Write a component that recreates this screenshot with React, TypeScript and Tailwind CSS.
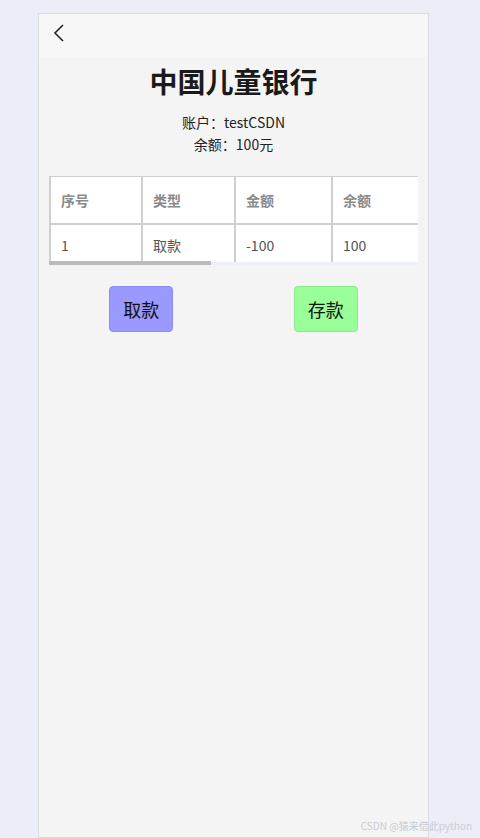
import React from 'react';

const columns = ['序号', '类型', '金额', '余额', '', ''];
const rows = [['1', '取款', '-100', '100', '', '']];
const widths = ['w-[92px]', 'w-[93px]', 'w-[97px]', 'w-[97px]', 'w-[240px]', 'w-[226px]'];

export default function App() {
  return (
    <div className="relative min-h-[838px] w-full overflow-hidden bg-[#ebeef7] font-['Microsoft_YaHei','Noto_Sans_CJK_SC',sans-serif]">
      <div className="ml-[38px] mt-[13px] flex h-[825px] w-[391px] flex-col border border-[#dcdcdc] bg-[#f4f4f4]">
        {/* top bar */}
        <div className="flex h-[43px] items-start bg-[#f7f7f7] pl-[14px] pt-[9px]">
          <svg width="12" height="20" viewBox="0 0 12 20" fill="none">
            <path d="M10 2 L2 10 L10 18" stroke="#222" strokeWidth="1.6" />
          </svg>
        </div>

        <h1 className="mt-[6px] text-center text-[28px] font-bold leading-[36px] text-[#1a1a1a]">中国儿童银行</h1>
        <div className="mt-[12px] text-center text-[14px] leading-[22px] text-[#222]">
          <p>账户：testCSDN</p>
          <p>余额：100元</p>
        </div>

        {/* table */}
        <div className="relative mx-[10px] mt-[21px] overflow-hidden">
          <div className="w-max border-t border-[#cfcfcf]">
            <div className="flex h-[48px] border-b-2 border-[#cfcfcf] bg-white">
              {columns.map((c, i) => (
                <div key={i} className={`${widths[i]} flex items-center border-l-2 border-[#cfcfcf] pl-[10px] text-[14px] font-bold text-[#8a8a8a]`}>
                  {c}
                </div>
              ))}
            </div>
            {rows.map((r) => (
              <div key={r[0]} className="flex h-[40px] bg-white">
                {r.map((v, i) => (
                  <div key={i} className={`${widths[i]} flex items-center border-l-2 border-[#cfcfcf] pl-[10px] text-[14px] text-[#555]`}>
                    {v}
                  </div>
                ))}
              </div>
            ))}
          </div>
          <div className="absolute bottom-0 left-0 h-[3px] w-full bg-[#eef0f7]" />
          <div className="absolute bottom-0 left-0 h-[4px] w-[162px] bg-[#bbbbbb]" />
        </div>

        {/* buttons */}
        <div className="mt-[21px] flex justify-around px-[10px]">
          <button className="h-[46px] w-[64px] rounded-[4px] border border-[#8c8cee] bg-[#9999ff] text-[18px] text-[#111]">取款</button>
          <button className="h-[46px] w-[64px] rounded-[4px] border border-[#8de88d] bg-[#99ff99] text-[18px] text-[#111]">存款</button>
        </div>
      </div>

      <div className="absolute bottom-[5px] right-[8px] text-[10px] text-[#c9ccd3]">CSDN @猿来借此python</div>
    </div>
  );
}
